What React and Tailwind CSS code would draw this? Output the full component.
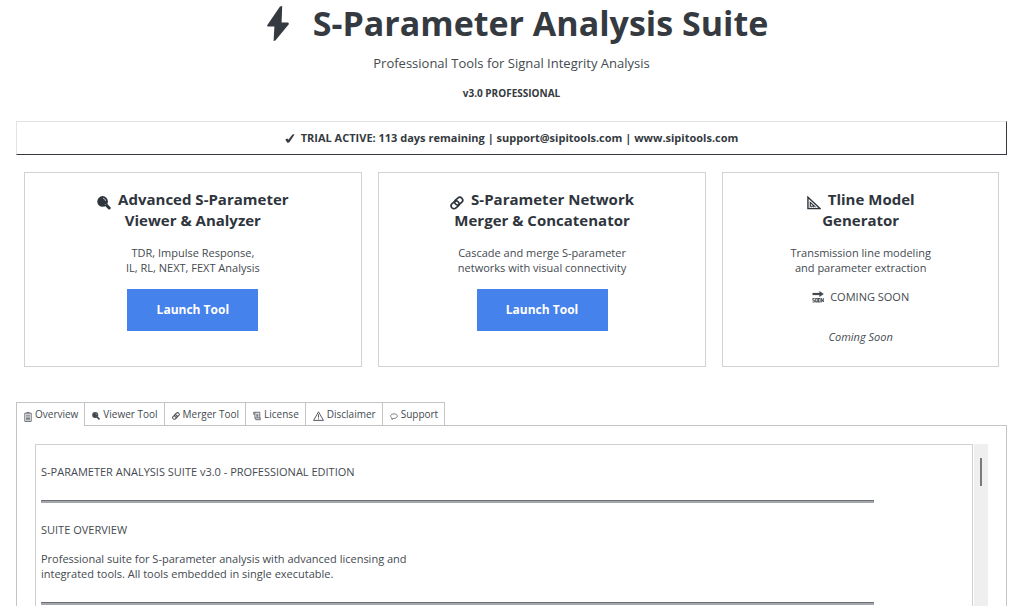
import React from 'react';

const BoltIcon = ({ className }) => (
  <svg viewBox="0 0 22 35" className={className} fill="currentColor" aria-hidden="true">
    <path d="M13 0.4L15.2 0L14.6 16.6H21.2L22 18L8.4 34.4L6.6 35L7.4 20.6H0.8L0 19.4Z" />
  </svg>
);

const SearchIcon = ({ className }) => (
  <svg viewBox="0 0 14 14" className={className} aria-hidden="true">
    <circle cx="5.6" cy="5.4" r="5.3" fill="currentColor" />
    <path d="M8.5 8.2L12.2 12" stroke="currentColor" strokeWidth="3" strokeLinecap="round" />
    <path d="M6 2.2Q8.4 2.6 8.6 5" stroke="#d5d8dc" strokeWidth="0.8" fill="none" />
    <path d="M7.8 9L9 7.8" stroke="#c5c8cc" strokeWidth="0.6" />
  </svg>
);

const LinkIcon = ({ className }) => (
  <svg viewBox="0 0 14 14" className={className} fill="none" stroke="currentColor" strokeWidth="1.7" aria-hidden="true">
    <rect x="4.4" y="2.2" width="8.6" height="5.8" rx="2.9" transform="rotate(-42 8.7 5.1)" />
    <rect x="0.8" y="6" width="8.6" height="5.8" rx="2.9" transform="rotate(-42 5.1 8.9)" />
  </svg>
);

const TriangleIcon = ({ className }) => (
  <svg viewBox="0 0 15 14" className={className} fill="none" stroke="currentColor" aria-hidden="true">
    <path d="M1 0.8V13H14Z" strokeWidth="1.5" />
    <path d="M3.5 6.4V10.5H8Z" strokeWidth="1.2" />
    <path d="M3 12V11M5 12V11M7 12V11M9 12V11M11 12V11" strokeWidth="0.6" />
  </svg>
);

const SoonIcon = ({ className }) => (
  <svg viewBox="0 0 12 12" className={className} fill="none" stroke="currentColor" aria-hidden="true">
    <path d="M0.5 3H9" strokeWidth="2.2" />
    <path d="M7.4 0L11.8 3L7.4 6Z" fill="currentColor" stroke="none" />
    <path d="M2.6 7.5H0.8V9.2H2.5V11H0.5" strokeWidth="0.9" />
    <rect x="3.7" y="7.5" width="1.6" height="3.5" strokeWidth="0.9" />
    <rect x="6.5" y="7.5" width="1.6" height="3.5" strokeWidth="0.9" />
    <path d="M9.4 11.4V7.4L11.3 11V7" strokeWidth="0.9" />
  </svg>
);

const CheckIcon = ({ className }) => (
  <svg viewBox="0 0 10 9" className={className} fill="currentColor" aria-hidden="true">
    <path d="M0.3 5.6L2.4 4.4L3.4 5.8L7.4 0.6L9.7 0.2L4.2 8.6L2.3 8.8Z" />
  </svg>
);

const ClipboardIcon = ({ className }) => (
  <svg viewBox="0 0 8 10" className={className} fill="none" stroke="currentColor" strokeWidth="0.8" aria-hidden="true">
    <path d="M0.8 1.2H7.2V9.4H0.8ZM2.6 0.6H5.4M2 3.2H6M2 5H6M2 6.4H6M2 7.8H6" />
  </svg>
);

const ScrollIcon = ({ className }) => (
  <svg viewBox="0 0 9 10" className={className} fill="none" stroke="currentColor" strokeWidth="0.9" aria-hidden="true">
    <path d="M2 3H0.8V0.8H7.6V7.2M2.2 1V7.2M2.2 7.2H8.2V9.2H3.2L2.2 7.4M3.6 3H6.2M3.6 4.6H6.2M3.6 6H6.2" />
  </svg>
);

const WarningIcon = ({ className }) => (
  <svg viewBox="0 0 11 10" className={className} fill="none" stroke="currentColor" strokeWidth="0.9" aria-hidden="true">
    <path d="M5.5 0.8L10.4 9.4H0.6ZM5.5 3.4V6.6M5.5 7.4V8.4" />
  </svg>
);

const BubbleIcon = ({ className }) => (
  <svg viewBox="0 0 9 8" className={className} fill="none" stroke="currentColor" strokeWidth="0.8" aria-hidden="true">
    <path d="M2.4 5.8C-0.6 4.6 0.2 1 4.5 1C9.6 1 9.6 6.2 4.2 6.2L2 7.4Z" />
  </svg>
);

const tabs = [
  { name: 'Overview', icon: ClipboardIcon, size: 'w-2 h-[10px]' },
  { name: 'Viewer Tool', icon: SearchIcon, size: 'w-2 h-2' },
  { name: 'Merger Tool', icon: LinkIcon, size: 'w-2 h-2' },
  { name: 'License', icon: ScrollIcon, size: 'w-2 h-[10px]' },
  { name: 'Disclaimer', icon: WarningIcon, size: 'w-[11px] h-[10px]' },
  { name: 'Support', icon: BubbleIcon, size: 'w-2 h-[7px]' },
];

const ToolCard = ({ icon: Icon, title, lines, children }) => (
  <section className="h-[195px] border border-[#d2d2d2] pt-4 text-center">
    <h2 className="text-[15px] leading-[21px] font-bold text-[#2f353d]">
      <Icon className="inline-block w-[14px] h-[14px] mr-[7px] mt-1" />
      {title[0]}
      <br />
      {title[1]}
    </h2>
    <p className="mt-[14px] text-[11px] leading-[15px]">
      {lines[0]}
      <br />
      {lines[1]}
    </p>
    {children}
  </section>
);

const LaunchButton = () => (
  <button type="button" className="mt-[14px] h-[42px] w-[131px] bg-[#4582ec] text-[12px] font-bold text-white">
    Launch Tool
  </button>
);

const Divider = () => (
  <div className="flex h-[15px] w-9/10 items-center pt-[2px]">
    <hr className="h-[3px] flex-1 border-t border-[#6c7076] bg-[#a3a6aa]" />
  </div>
);

const App = () => {
  return (
    <div className="h-screen overflow-hidden bg-white pl-4 pr-[17px] font-['Open_Sans','Noto_Sans',sans-serif] text-[#444a50]">
      {/* Header */}
      <header className="flex flex-col items-center">
        <h1 className="flex items-center gap-6 pl-3 text-[34px] leading-[46px] font-bold text-[#343a40]">
          <BoltIcon className="w-[22px] h-[35px]" />
          S-Parameter Analysis Suite
        </h1>
        <p className="mt-[7px] text-[13px] leading-5">Professional Tools for Signal Integrity Analysis</p>
        <p className="mt-3 text-[10px] leading-4 font-bold text-[#343a40]">v3.0 PROFESSIONAL</p>
      </header>

      {/* License status */}
      <div className="mt-5 flex h-[34px] items-center justify-center gap-[6px] border border-[#e3e3e3] border-r-[#343a40] border-b-[#343a40] pt-px text-[11px] font-bold text-[#343a40]">
        <CheckIcon className="w-[10px] h-[9px]" />
        <p>TRIAL ACTIVE: 113 days remaining | support@sipitools.com | www.sipitools.com</p>
      </div>

      {/* Tools */}
      <main className="mt-[17px] grid grid-cols-[337fr_328fr_276fr] gap-4 px-2">
        <ToolCard
          icon={SearchIcon}
          title={['Advanced S-Parameter', 'Viewer & Analyzer']}
          lines={['TDR, Impulse Response,', 'IL, RL, NEXT, FEXT Analysis']}
        >
          <LaunchButton />
        </ToolCard>
        <ToolCard
          icon={LinkIcon}
          title={['S-Parameter Network', 'Merger & Concatenator']}
          lines={['Cascade and merge S-parameter', 'networks with visual connectivity']}
        >
          <LaunchButton />
        </ToolCard>
        <ToolCard
          icon={TriangleIcon}
          title={['Tline Model', 'Generator']}
          lines={['Transmission line modeling', 'and parameter extraction']}
        >
          <p className="mt-[14px] flex items-center justify-center gap-[6px] text-[11px] leading-[15px]">
            <SoonIcon className="w-3 h-3" />
            COMING SOON
          </p>
          <p className="mt-[25px] text-[11px] leading-[15px] italic">Coming Soon</p>
        </ToolCard>
      </main>

      {/* Tabs */}
      <div className="mt-[35px] flex" role="tablist">
        {tabs.map(({ name, icon: Icon, size }, i) => (
          <button
            key={name}
            type="button"
            role="tab"
            aria-selected={i === 0}
            className={`flex h-6 items-center gap-[3px] border-t border-r border-[#c4c4c4] pl-[7px] pr-[6px] text-[10px] ${
              i === 0 ? 'border-l' : 'border-b'
            }`}
          >
            <Icon className={`mt-1 ${size}`} />
            {name}
          </button>
        ))}
        <div className="flex-1 border-b border-[#c4c4c4]"></div>
      </div>

      <div className="flex border-x border-[#c4c4c4] px-[18px] pt-[18px]" role="tabpanel">
        <article className="h-96 flex-1 space-y-[14px] border border-[#cfcfcf] px-[5px] pt-[19px] text-[11px] leading-[15px]">
          <p>S-PARAMETER ANALYSIS SUITE v3.0 - PROFESSIONAL EDITION</p>
          <Divider />
          <p>SUITE OVERVIEW</p>
          <p>
            Professional suite for S-parameter analysis with advanced licensing and
            <br />
            integrated tools. All tools embedded in single executable.
          </p>
          <Divider />
        </article>
        <div className="ml-px w-[14px] bg-[#efefef] pt-[14px]">
          <div className="mx-auto h-7 w-[2px] bg-[#7a7a7a]"></div>
        </div>
      </div>
    </div>
  );
};

export default App;
